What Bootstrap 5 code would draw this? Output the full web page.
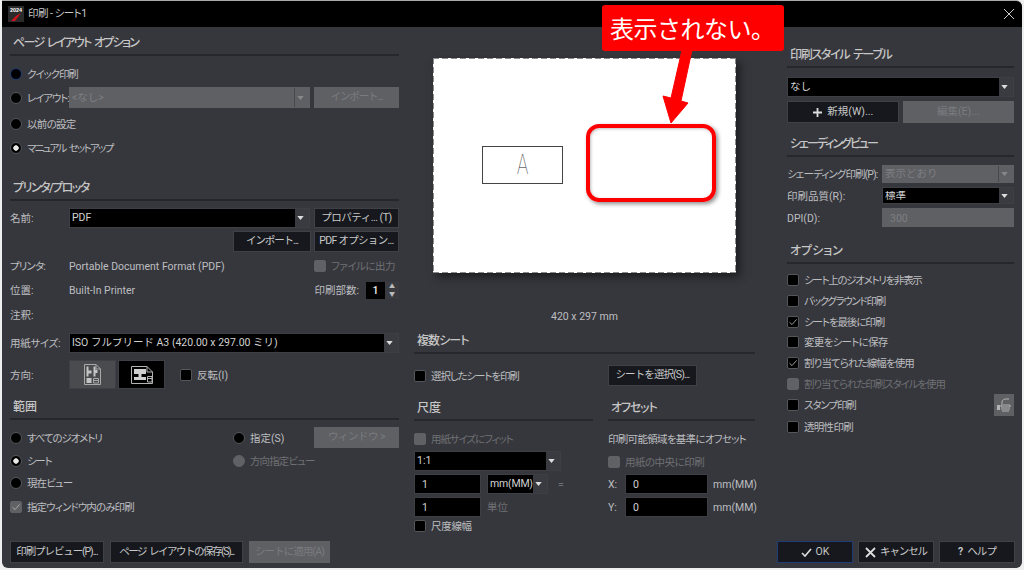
<!DOCTYPE html>
<html lang="ja">
<head>
<meta charset="UTF-8">
<title>印刷 - シート1</title>
<link href="https://cdn.jsdelivr.net/npm/bootstrap@5.3.3/dist/css/bootstrap.min.css" rel="stylesheet">
<style>
html, body { height: 100%; }
body { background: #efefef; overflow: hidden; font-family: Roboto, "Noto Sans CJK JP", sans-serif; font-size: 10.5px; color: #bdbec0; font-feature-settings: "palt"; white-space: nowrap; }
.dlg { position: relative; width: 1020px; height: 567px; margin: 1px 0 0 2px; background: #36373c; border-radius: 0 6px 6px 6px; box-shadow: 0 -1px 0 #aaa; }
.ttl { height: 26px; background: #000; border-radius: 0 6px 0 0; padding-left: 6px; color: #c8c8c8; line-height: 1; }
.ttl-ic { width: 16px; height: 16px; }
.ttl-x { width: 12px; height: 12px; margin-right: 7px; }
.body-wrap { height: 514px; padding-left: 8px; }
.body-wrap span { padding-top: 2px; }
.col-l { width: 389px; }
.col-c { width: 341px; margin-left: 15px; }
.col-r { width: 227px; margin-left: 32px; }
.sect { padding: 0 0 4px 3px; border-bottom: 2px solid #26272b; font-size: 12px; font-weight: 500; color: #c6c6c6; display: flex; align-items: flex-end; line-height: 1.2; }
.h17 { height: 17px; } .h18 { height: 18px; } .h19 { height: 19px; } .h20 { height: 20px; } .h21 { height: 21px; } .h22 { height: 22px; } .h23 { height: 23px; }
.h24 { height: 24px; } .h25 { height: 25px; } .h27 { height: 27px; } .h29 { height: 29px; }
.h31 { height: 31px; } .h34 { height: 34px; } .h35 { height: 35px; } .h37 { height: 37px; } .h41 { height: 41px; }
.t2 { margin-top: 2px; } .t3 { margin-top: 3px; } .t4 { margin-top: 4px; } .t5 { margin-top: 5px; } .t6 { margin-top: 6px; } .t7 { margin-top: 7px; } .t8 { margin-top: 8px; } .t9 { margin-top: 9px; } .t11 { margin-top: 11px; } .t31 { margin-top: 31px; } .t36 { margin-top: 36px; }
.s3 { letter-spacing: -.3px; } .s5 { letter-spacing: -.5px; } .s7 { letter-spacing: -.7px; } .s9 { letter-spacing: -.9px; } .s11 { letter-spacing: -1.1px; } .s13 { letter-spacing: -1.3px; word-spacing: 2px; } .s15 { letter-spacing: -1.5px; word-spacing: 2px; } .s17 { letter-spacing: -1.7px; word-spacing: 2px; } .s20 { letter-spacing: -2px; }
.lbl { width: 59px; flex: none; }
.lbl-r { width: 95px; flex: none; }
.off { color: #6f7074; }
.dlg .form-check-input { width: 12px; height: 12px; margin: 0 5px 0 0; flex: none; background-color: #000; border: 1px solid #55565a; box-shadow: none; opacity: 1; float: none; }
.dlg .form-check-input[type=checkbox] { border-radius: 2px; }
.dlg .form-check-input:checked[type=radio] { background-image: radial-gradient(circle, #e8e8e8 0 2.4px, #000 3px); }
.dlg .form-check-input:checked[type=checkbox] { background-image: url("data:image/svg+xml,%3csvg xmlns='http://www.w3.org/2000/svg' viewBox='0 0 12 12'%3e%3cpath fill='none' stroke='%23bbb' stroke-width='.8' d='M2.5 6.2 5 8.6 9.6 3.4'/%3e%3c/svg%3e"); background-size: 12px; }
.dlg .form-check-input:disabled { background-color: #606165; border-color: #606165; }
.dlg .form-check-input.foc { border-color: #1f3c74; }
.chk { display: flex; align-items: center; }
.dlg .form-select, .dlg .form-control { height: 100%; min-height: 0; padding: 1px 3px 0; font-size: 10.5px; line-height: 1; border-radius: 0; color: #d2d2d2; background-color: #000; border: 1px solid #3e3f44; box-shadow: none; }
.dlg .form-control { padding-left: 7px; }
.dlg .form-select { padding-left: 2px; padding-right: 16px; background: url("data:image/svg+xml,%3csvg xmlns='http://www.w3.org/2000/svg' viewBox='0 0 8 5'%3e%3cpath fill='%23ddd' d='M0 0h8L4 5z'/%3e%3c/svg%3e") right 5px center / 7px 4px no-repeat, linear-gradient(to left, #3a3b40 0 14px, #000 14px); }
.dlg .form-select:disabled, .dlg .form-control:disabled { color: #7d7e82; border-color: #5f6064; }
.dlg .form-select:disabled { background: url("data:image/svg+xml,%3csvg xmlns='http://www.w3.org/2000/svg' viewBox='0 0 8 5'%3e%3cpath fill='%23888' d='M0 0h8L4 5z'/%3e%3c/svg%3e") right 5px center / 7px 4px no-repeat, linear-gradient(to left, #5f6064 0 14px, #47484b 14px 15px, #5f6064 15px); }
.dlg .form-control:disabled { background: #5f6064; }
.dlg .btn { height: 100%; padding: 0; font-size: 10.5px; line-height: 1; border-radius: 0; color: #c8c8c8; background: #16181d; border: 1px solid #404146; display: inline-flex; align-items: center; justify-content: center; white-space: nowrap; }
.dlg .btn:disabled { color: #7a7b7f; background: #5f6064; border-color: #5f6064; opacity: 1; }
.dlg .btn.pri { border-color: #1f3c74; }
.w78 { width: 78px; } .w85 { width: 85px; } .w94 { width: 94px; } .w133 { width: 133px; } .w81 { width: 81px; } .w89 { width: 89px; } .w76 { width: 76px; } .w20 { width: 20px; }
.sel-a { width: 241px; flex: none; }
.gap3 { gap: 3px; } .gap4 { gap: 4px; } .gap5 { gap: 5px; } .gap6 { gap: 6px; }
.orient { width: 47px; height: 29px; border: 1px solid #3f4045; }
.orient-a { background: #4a4b4e; }
.orient-b { background: #000; margin-left: 2px; }
.or-p { width: 17px; height: 21px; }
.or-l { width: 22px; height: 18px; }
.flip { margin-left: 15px; }
.spin { width: 33px; height: 17px; margin-left: 7px; }
.spin-v { width: 19px; background: #000; color: #eee; font-weight: 500; text-align: center; line-height: 17px; }
.spin-b { width: 14px; font-size: 6px; line-height: 8px; text-align: center; color: #bbb; background: #3a3b40; }
.paper { width: 303px; height: 215px; margin-left: 19px; padding: 88px 0 0 49px; box-shadow: 4px 4px 8px #1c1d20; background:
  linear-gradient(90deg, #8a8a8a 6px, transparent 6px) top left / 9px 1px repeat-x,
  linear-gradient(90deg, #8a8a8a 6px, transparent 6px) bottom left / 9px 1px repeat-x,
  linear-gradient(#8a8a8a 6px, transparent 6px) top left / 1px 9px repeat-y,
  linear-gradient(#8a8a8a 6px, transparent 6px) top right / 1px 9px repeat-y,
  #fff; }
.draw { width: 81px; height: 38px; border: 1px solid #444; color: #222; font-family: Inter, "Liberation Sans", sans-serif; font-size: 27px; font-weight: 100; line-height: 36px; text-align: center; background: #fff; }
.body-wrap .draw span { display: inline-block; transform: scaleX(.68); padding: 0; }
.sub-l { width: 179px; }
.sub-r { width: 147px; margin-left: 15px; }
.inp67 { width: 67px; flex: none; }
.sel147 { width: 147px; }
.dlg .form-select.sel61 { width: 61px; flex: none; padding-right: 13px; letter-spacing: -.2px; }
.inp83 { width: 83px; flex: none; }
.unit { width: 42px; flex: none; text-align: right; }
.xy { width: 17px; flex: none; }
.foot { padding: 0 7px 0 8px; }
.ico-s { width: 11px; height: 11px; margin-right: 4px; }
.callout { position: absolute; left: 600px; top: 4px; width: 182px; height: 46px; background: #f00; color: #fff; border-radius: 3px; font-family: "Noto Sans CJK JP", sans-serif; font-size: 24px; font-feature-settings: normal; line-height: 46px; padding-left: 8px; letter-spacing: -.5px; }
.over { position: absolute; left: 0; top: 0; width: 1020px; height: 567px; pointer-events: none; }
.frame { position: absolute; left: 584px; top: 123px; width: 130px; height: 78px; border: 4px solid #f00; border-radius: 13px; box-shadow: 2px 2px 4px rgba(0,0,0,.45), inset 1px 1px 3px rgba(0,0,0,.25); }
</style>
</head>
<body>
<div class="dlg">
  <div class="ttl d-flex align-items-center justify-content-between">
    <div class="d-flex align-items-center gap-1">
      <svg class="ttl-ic" viewBox="0 0 16 16"><rect width="16" height="16" fill="#2b2b2b"/><text x="8" y="6" font-size="5.4" font-weight="700" fill="#fff" text-anchor="middle" font-family="Liberation Sans">2024</text><path d="M3 15 8 10l5-3-3 4-3 4z" fill="#d3131b"/></svg>
      <span class="s5">印刷 - シート1</span>
    </div>
    <svg class="ttl-x" viewBox="0 0 12 12"><path d="M1 1l10 10M11 1 1 11" stroke="#ccc" stroke-width="1"/></svg>
  </div>

  <div class="body-wrap d-flex">
    <div class="col-l">
      <div class="sect h29 s17">ページ レイアウト オプション</div>
      <label class="chk h23 t6"><input class="form-check-input foc" type="radio" name="m"><span class="s11">クイック印刷</span></label>
      <div class="d-flex align-items-center h21 t2">
        <label class="chk lbl"><input class="form-check-input" type="radio" name="m"><span class="s11">レイアウト:</span></label>
        <select class="form-select sel-a" disabled><option>&lt;なし&gt;</option></select>
        <button class="btn w85 ms-auto s11" disabled>インポート...</button>
      </div>
      <label class="chk h25 t3">
        <input class="form-check-input" type="radio" name="m"><span class="s7">以前の設定</span></label>
      <label class="chk h24"><input class="form-check-input" type="radio" name="m" checked><span class="s17">マニュアル セットアップ</span></label>

      <div class="sect h41 s15">プリンタ/プロッタ</div>
      <div class="d-flex align-items-center h20 t7">
        <span class="lbl">名前:</span>
        <select class="form-select sel-a"><option>PDF</option></select>
        <button class="btn w85 ms-auto s5">プロパティ... (T)</button>
      </div>
      <div class="d-flex justify-content-end gap3 h21 t3">
        <button class="btn w78 s11">インポート...</button>
        <button class="btn w85 s7">PDF オプション...</button>
      </div>
      <div class="d-flex align-items-center h24 t2">
        <span class="lbl s9">プリンタ:</span><span>Portable Document Format (PDF)</span>
        <label class="chk off ms-auto w85"><input class="form-check-input" type="checkbox" disabled><span class="s5">ファイルに出力</span></label>
      </div>
      <div class="d-flex align-items-center h24">
        <span class="lbl">位置:</span><span>Built-In Printer</span>
        <span class="ms-auto">印刷部数:</span>
        <div class="spin d-flex">
          <div class="spin-v">1</div>
          <div class="spin-b"><div>▲</div><div>▼</div></div>
        </div>
      </div>
      <div class="d-flex align-items-center h25"><span class="lbl">注釈:</span></div>
      <div class="d-flex align-items-center h20 t6">
        <span class="lbl s3">用紙サイズ:</span>
        <select class="form-select flex-grow-1"><option>ISO フルブリード A3 (420.00 x 297.00 ミリ)</option></select>
      </div>
      <div class="d-flex align-items-center h29 t7">
        <span class="lbl">方向:</span>
        <div class="orient orient-a d-flex align-items-center justify-content-center">
          <svg class="or-p" viewBox="0 0 17 21"><path d="M.5.5H12L16.5 5v15.5H.5z" fill="none" stroke="#a8a8a8"/><path d="M12 .5V5h4.5" fill="none" stroke="#a8a8a8"/><path d="M2.500 2.500h2v4h3v3h-3v3h-2zM9.500 2.500h2v10h-2zM11.500 6h2v3h-2z" fill="#c4c4c4"/><path d="M2.500 14h5v5h-5z" fill="#c4c4c4"/><path d="M9.500 14.500h5v4.500h-5zM9.500 16.500h5" fill="none" stroke="#a8a8a8"/></svg>
        </div>
        <div class="orient orient-b d-flex align-items-center justify-content-center">
          <svg class="or-l" viewBox="0 0 22 18"><path d="M.5.5h15.500l5.500 5.500v11.500H.5z" fill="none" stroke="#b4b4b4"/><path d="M16 .5V6h5.500" fill="none" stroke="#b4b4b4"/><path d="M3 3h12v5H3zM7.500 8h3v3h4.500v3H3v-3h4.500z" fill="#cfcfcf"/><path d="M16.500 10.500h4.500v5.500h-4.500zM16.500 12.500h4.500" fill="none" stroke="#b4b4b4"/></svg>
        </div>
        <label class="chk flip"><input class="form-check-input" type="checkbox"><span>反転(I)</span></label>
      </div>

      <div class="sect h31">範囲</div>
      <div class="d-flex align-items-center h21 t7">
        <label class="chk flex-grow-1"><input class="form-check-input" type="radio" name="r"><span class="s11">すべてのジオメトリ</span></label>
        <label class="chk w81"><input class="form-check-input" type="radio" name="r"><span>指定(S)</span></label>
        <button class="btn w85 s5" disabled>ウィンドウ &gt;</button>
      </div>
      <div class="d-flex align-items-center h22 t2">
        <label class="chk flex-grow-1"><input class="form-check-input" type="radio" name="r" checked><span class="s13">シート</span></label>
        <label class="chk off w81"><input class="form-check-input" type="radio" name="r" disabled><span class="s9">方向指定ビュー</span></label>
        <span class="w85"></span>
      </div>
      <label class="chk h22"><input class="form-check-input" type="radio" name="r"><span class="s9">現在ビュー</span></label>
      <label class="chk h22 t2"><input class="form-check-input" type="checkbox" checked disabled><span class="s9">指定ウィンドウ内のみ印刷</span></label>
    </div>

    <div class="col-c">
      <div class="t31">
        <div class="paper">
          <div class="draw"><span>A</span></div>
        </div>
      </div>
      <div class="h18 t36 text-center">420 x 297 mm</div>
      <div class="sect h27 s9">複数シート</div>
      <div class="d-flex h21 t11">
        <label class="chk sub-l"><input class="form-check-input" type="checkbox"><span class="s11">選択したシートを印刷</span></label>
        <div class="sub-r"><button class="btn w89 s9">シートを選択(S)...</button></div>
      </div>
      <div class="d-flex">
        <div class="sub-l">
          <div class="sect h35">尺度</div>
          <label class="chk off h20 t8"><input class="form-check-input" type="checkbox" disabled><span class="s11">用紙サイズにフィット</span></label>
          <div class="h20 t2 sel147"><select class="form-select w-100"><option>1:1</option></select></div>
          <div class="d-flex align-items-center gap6 h20 t3">
            <input class="form-control inp67" value="1">
            <select class="form-select sel61"><option>mm(MM)</option></select>
            <span class="off ms-1">=</span>
          </div>
          <div class="d-flex align-items-center gap6 h20 t3">
            <input class="form-control inp67" value="1">
            <span class="off">単位</span>
          </div>
          <label class="chk h18"><input class="form-check-input" type="checkbox"><span class="s3">尺度線幅</span></label>
        </div>
        <div class="sub-r">
          <div class="sect h35 s11">オフセット</div>
          <div class="d-flex align-items-center h20 t8"><span class="s7">印刷可能領域を基準にオフセット</span></div>
          <label class="chk off h20 t3"><input class="form-check-input" type="checkbox" disabled><span class="s5">用紙の中央に印刷</span></label>
          <div class="d-flex align-items-center h20 t2">
            <span class="xy">X:</span><input class="form-control inp83" value="0"><span class="unit ms-auto">mm(MM)</span>
          </div>
          <div class="d-flex align-items-center h20 t3">
            <span class="xy">Y:</span><input class="form-control inp83" value="0"><span class="unit ms-auto">mm(MM)</span>
          </div>
        </div>
      </div>
    </div>

    <div class="col-r">
      <div class="sect h41 s13">印刷スタイル テーブル</div>
      <div class="h20 t9"><select class="form-select w-100"><option>なし</option></select></div>
      <div class="d-flex gap4 h22 t4">
        <button class="btn flex-grow-1 w-50"><svg class="ico-s" viewBox="0 0 11 11"><path d="M5.500 1v9M1 5.500h9" stroke="#ddd" stroke-width="1.800"/></svg>新規(W)...</button>
        <button class="btn flex-grow-1 w-50" disabled>編集(E)...</button>
      </div>
      <div class="sect h34 s20">シェーディングビュー</div>
      <div class="d-flex align-items-center h18 t8">
        <span class="lbl-r s9">シェーディング印刷(P):</span>
        <select class="form-select flex-grow-1" disabled><option>表示どおり</option></select>
      </div>
      <div class="d-flex align-items-center h17 t4">
        <span class="lbl-r">印刷品質(R):</span>
        <select class="form-select flex-grow-1"><option>標準</option></select>
      </div>
      <div class="d-flex align-items-center h19 t4">
        <span class="lbl-r">DPI(D):</span>
        <input class="form-control flex-grow-1" value="300" disabled>
      </div>
      <div class="sect h37">オプション</div>
      <label class="chk h21 t5"><input class="form-check-input" type="checkbox"><span class="s13">シート上のジオメトリを非表示</span></label>
      <label class="chk h21"><input class="form-check-input" type="checkbox"><span class="s13">バックグラウンド印刷</span></label>
      <label class="chk h21"><input class="form-check-input" type="checkbox" checked><span class="s11">シートを最後に印刷</span></label>
      <label class="chk h20"><input class="form-check-input" type="checkbox"><span class="s7">変更をシートに保存</span></label>
      <label class="chk h21"><input class="form-check-input" type="checkbox" checked><span class="s9">割り当てられた線幅を使用</span></label>
      <label class="chk off h21"><input class="form-check-input" type="checkbox" disabled><span class="s11">割り当てられた印刷スタイルを使用</span></label>
      <div class="d-flex align-items-center justify-content-between h22">
        <label class="chk"><input class="form-check-input" type="checkbox"><span class="s11">スタンプ印刷</span></label>
        <button class="btn w20" disabled>
          <svg width="16" height="16" viewBox="0 0 16 16"><path d="M6 7V5c0-2 2-3 4-3h3M5 8h9v2H5zM5 12h9M6 14h7" fill="none" stroke="#b4b4b4"/><rect x="1" y="8" width="3" height="5" fill="#b4b4b4"/></svg>
        </button>
      </div>
      <label class="chk h22"><input class="form-check-input" type="checkbox"><span class="s7">透明性印刷</span></label>
    </div>
  </div>

  <div class="foot d-flex justify-content-between h22">
    <div class="d-flex gap6">
      <button class="btn w94 s11">印刷プレビュー(P)...</button>
      <button class="btn w133 s15">ページ レイアウトの保存(S)...</button>
      <button class="btn w81 s9" disabled>シートに適用(A)</button>
    </div>
    <div class="d-flex gap5">
      <button class="btn w76 pri"><svg class="ico-s" viewBox="0 0 11 11"><path d="M1 6l3 3 6-7" fill="none" stroke="#ddd" stroke-width="1.600"/></svg>OK</button>
      <button class="btn w76"><svg class="ico-s" viewBox="0 0 11 11"><path d="M1 1l9 9M10 1l-9 9" stroke="#ddd" stroke-width="1.800"/></svg><span class="s11">キャンセル</span></button>
      <button class="btn w76"><b class="me-1">?</b><span class="s9">ヘルプ</span></button>
    </div>
  </div>

  <div class="frame"></div>
  <svg class="over" viewBox="0 0 1020 567"><path d="M680 49 690 49 679 100 686 102 669 122 661 95 669 97z" fill="#f00" stroke="#f00" stroke-width="1"/></svg>
  <div class="callout">表示されない。</div>
</div>
</body>
</html>
